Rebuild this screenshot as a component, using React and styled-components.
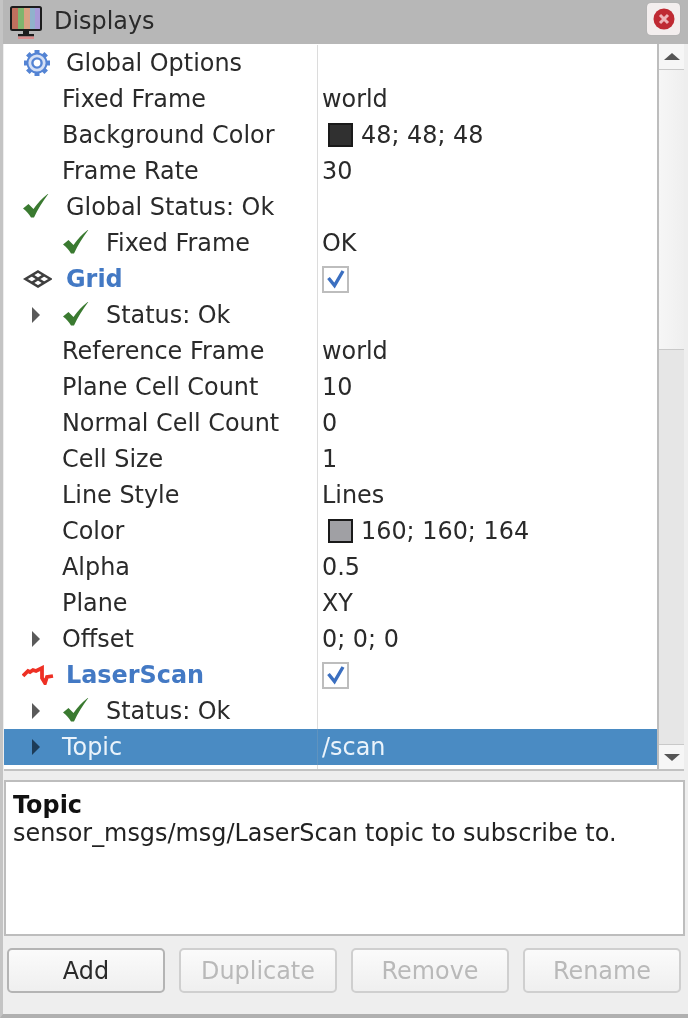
import React from "react";
import styled, { createGlobalStyle } from "styled-components";

const Global = createGlobalStyle`
  html, body { margin: 0; padding: 0; background: #eeeeee; }
  * { box-sizing: border-box; }
`;

const Panel = styled.div`
  width: 688px; height: 1018px; display: flex; flex-direction: column;
  background: #eeeeee; font-family: "DejaVu Sans", sans-serif; font-size: 23.9px; color: #2a2a2a;
  border-left: 3px solid #c4c4c4; border-bottom: 4px solid #b0b0b0;
  overflow: hidden; filter: blur(0.45px);
`;
const TitleBar = styled.div`
  height: 44px; flex: none; margin-left: -3px; background: #b7b7b7; display: flex; align-items: center;
  padding: 0 8px 0 10px;
`;
const TitleText = styled.span`
  margin-left: 12px; flex: 1; color: #2a2a2a; position: relative; top: -1px;
`;
const CloseButton = styled.div`
  width: 33px; height: 32px; border-radius: 4px; background: #f3eeee; display: flex; align-items: center; justify-content: center;
  position: relative; top: -3px; box-shadow: 0 0 1px #999;
`;
const TreeArea = styled.div`
  height: 727px; flex: none; display: flex; margin-left: 1px; margin-right: 4px; background: #fff; border-bottom: 2px solid #c2c2c2;
`;
const Tree = styled.div`
  flex: 1; min-width: 0; display: flex; flex-direction: column; padding-top: 1px;
`;
const Row = styled.div`
  height: 36px; flex: none; display: flex; align-items: center;
  background: ${p => (p.$selected ? "#4a8bc3" : "transparent")};
  color: ${p => (p.$selected ? "#eaf3fb" : "inherit")};
`;
const NameCell = styled.div`
  width: 313px; height: 100%; flex: none; display: flex; align-items: center; padding-left: 18px;
`;
const ValueCell = styled.div`
  flex: 1; height: 100%; display: flex; align-items: center; padding-left: 4px;
  border-left: 1px solid ${p => (p.$selected ? "#5f93bf" : "#dcdcdc")};
`;
const FillRow = styled.div`
  flex: 1; display: flex;
`;
const FillName = styled.div`
  width: 313px;
`;
const FillValue = styled.div`
  flex: 1; border-left: 1px solid #dcdcdc;
`;
const ArrowSlot = styled.div`
  width: 40px; flex: none; display: flex; padding-left: 10px; align-items: center;
`;
const IconSlot = styled.div`
  width: 44px; flex: none; display: flex; align-items: center;
`;
const Arrow = styled.div`
  width: 0; height: 0; border-style: solid; border-width: 8px 0 8px 8px;
  border-color: transparent transparent transparent ${p => (p.$selected ? "#1d3c58" : "#5a5a5a")};
`;
const Label = styled.span`
  white-space: nowrap;
  font-weight: ${p => (p.$display ? 700 : 400)};
  color: ${p => (p.$display ? "#4379c4" : "inherit")};
`;
const Swatch = styled.span`
  width: 25px; height: 24px; margin: 0 8px 0 6px; flex: none; border: 2px solid #1a1a1a; background: ${p => p.$color};
`;
const CheckBox = styled.span`
  width: 27px; height: 27px; flex: none; border: 2px solid #bdbdbd; background: #fff; display: flex; align-items: center; justify-content: center;
`;
const ScrollBar = styled.div`
  width: 27px; flex: none; display: flex; flex-direction: column; border-left: 2px solid #bdbdbd; background: #e6e6e6;
`;
const ScrollButton = styled.div`
  height: ${p => p.$h}px; flex: none; background: #f6f6f6; display: flex; align-items: center; justify-content: center;
  ${p => (p.$top ? "border-bottom: 1px solid #c9c9c9;" : "border-top: 1px solid #c9c9c9;")}
`;
const ScrollHandle = styled.div`
  height: 280px; flex: none; background: linear-gradient(90deg, #f6f6f6, #efefef); border-bottom: 1px solid #c9c9c9;
`;
const ScrollGroove = styled.div`
  flex: 1;
`;
const Triangle = styled.div`
  width: 0; height: 0; border-style: solid;
  border-width: ${p => (p.$up ? "0 8px 7px 8px" : "7px 8px 0 8px")};
  border-color: ${p => (p.$up ? "transparent transparent #555 transparent" : "#555 transparent transparent transparent")};
`;
const Description = styled.div`
  height: 156px; flex: none; margin: 9px 3px 0 1px; background: #fff; border: 2px solid #bdbdbd; padding: 9px 7px; line-height: 28px; color: #222;
`;
const DescTitle = styled.div`
  font-weight: 700; color: #111;
`;
const ButtonBar = styled.div`
  flex: 1; display: flex; gap: 14px; padding: 12px 0 0 4px;
`;
const Button = styled.div`
  width: 158px; height: 45px; border-radius: 5px; display: flex; align-items: center; justify-content: center;
  border: 2px solid ${p => (p.$disabled ? "#cfcfcf" : "#b4b4b4")};
  background: linear-gradient(#fbfbfb, #efefef);
  color: ${p => (p.$disabled ? "#b9b9b9" : "#2a2a2a")};
`;

const Monitor = () => (
  <svg width="32" height="33" viewBox="0 0 32 33">
    <rect x="2" y="2" width="6" height="21" fill="#c0705e" />
    <rect x="8" y="2" width="6" height="21" fill="#7fb56e" />
    <rect x="14" y="2" width="6" height="21" fill="#d9a183" />
    <rect x="20" y="2" width="5" height="21" fill="#90b2cc" />
    <rect x="25" y="2" width="5" height="21" fill="#a89ad8" />
    <rect x="1" y="1" width="30" height="23" rx="1.5" fill="none" stroke="#1c1c1c" strokeWidth="2" />
    <path d="M13 25h6v3h-6z" fill="#1c1c1c" />
    <path d="M8 28h16v2.5H8z" fill="#1c1c1c" />
    <path d="M8 30.5h16V33H8z" fill="#d98a8a" />
  </svg>
);
const Gear = () => (
  <svg width="28" height="28" viewBox="0 0 28 28">
    <g stroke="#5484d4" strokeWidth="5">
      {[0, 45, 90, 135, 180, 225, 270, 315].map(a => (
        <path key={a} d="M15 1v5" transform={`rotate(${a} 15 14)`} />
      ))}
    </g>
    <circle cx="15" cy="14" r="10.5" fill="#5484d4" />
    <circle cx="15" cy="14" r="8.6" fill="#d5e0f5" />
    <circle cx="15" cy="14" r="4.6" fill="#fff" stroke="#5484d4" strokeWidth="2.4" />
  </svg>
);
const Check = () => (
  <svg width="28" height="26" viewBox="0 1 28 26">
    <path d="M1 15.5 6.5 11 11.5 16C16 9.5 21 4.5 27 0 21.5 7.5 16 15.5 12 24.5H9C7 21 4.5 18 1 15.5z" fill="#3a7a30" />
  </svg>
);
const GridIcon = () => (
  <svg width="30" height="18" viewBox="0 0 30 18" fill="none" stroke="#3f3f3f" strokeWidth="2.6">
    <path d="M16 1.5 28.5 9 16 16.5 3.5 9z" />
    <path d="M10 5.2 22 12.8M22 5.2 10 12.8" />
  </svg>
);
const LaserIcon = () => (
  <svg width="32" height="20" viewBox="0 0 32 20" fill="none" stroke="#ee3024" strokeWidth="3.8">
    <path d="M1 11 6 6l2 1 3-2 3 1 6-3 0 10 3 5 2-6 6-1" />
  </svg>
);
const Tick = () => (
  <svg width="20" height="20" viewBox="0 0 20 20" fill="none">
    <path d="M2.5 9l6 7.5L17 2" stroke="#3b6fc0" strokeWidth="3.4" />
  </svg>
);
const CloseIcon = () => (
  <svg width="22" height="22" viewBox="0 0 22 22">
    <circle cx="11" cy="11" r="10.5" fill="#bf2a33" />
    <path d="M7 7l8 8M15 7l-8 8" stroke="#eeb4b8" strokeWidth="3" />
  </svg>
);

const rows = [
  { icon: <Gear />, name: "Global Options" },
  { indent: true, name: "Fixed Frame", value: "world" },
  { indent: true, name: "Background Color", value: "48; 48; 48", color: "#303030" },
  { indent: true, name: "Frame Rate", value: "30" },
  { icon: <Check />, name: "Global Status: Ok" },
  { indent: true, icon: <Check />, name: "Fixed Frame", value: "OK" },
  { icon: <GridIcon />, name: "Grid", display: true, checked: true },
  { indent: true, arrow: true, icon: <Check />, name: "Status: Ok" },
  { indent: true, name: "Reference Frame", value: "world" },
  { indent: true, name: "Plane Cell Count", value: "10" },
  { indent: true, name: "Normal Cell Count", value: "0" },
  { indent: true, name: "Cell Size", value: "1" },
  { indent: true, name: "Line Style", value: "Lines" },
  { indent: true, name: "Color", value: "160; 160; 164", color: "#a0a0a4" },
  { indent: true, name: "Alpha", value: "0.5" },
  { indent: true, name: "Plane", value: "XY" },
  { indent: true, arrow: true, name: "Offset", value: "0; 0; 0" },
  { icon: <LaserIcon />, name: "LaserScan", display: true, checked: true },
  { indent: true, arrow: true, icon: <Check />, name: "Status: Ok" },
  { indent: true, arrow: true, name: "Topic", value: "/scan", selected: true },
];

export default function App() {
  return (
    <>
      <Global />
      <Panel>
        <TitleBar>
          <Monitor />
          <TitleText>Displays</TitleText>
          <CloseButton><CloseIcon /></CloseButton>
        </TitleBar>
        <TreeArea>
          <Tree>
            {rows.map((r, i) => (
              <Row key={i} $selected={r.selected}>
                <NameCell>
                  {r.indent && <ArrowSlot>{r.arrow && <Arrow $selected={r.selected} />}</ArrowSlot>}
                  {r.icon && <IconSlot>{r.icon}</IconSlot>}
                  <Label $display={r.display}>{r.name}</Label>
                </NameCell>
                <ValueCell $selected={r.selected}>
                  {r.color && <Swatch $color={r.color} />}
                  {r.value}
                  {r.checked && <CheckBox><Tick /></CheckBox>}
                </ValueCell>
              </Row>
            ))}
            <FillRow><FillName /><FillValue /></FillRow>
          </Tree>
          <ScrollBar>
            <ScrollButton $h={26} $top><Triangle $up /></ScrollButton>
            <ScrollHandle />
            <ScrollGroove />
            <ScrollButton $h={25}><Triangle /></ScrollButton>
          </ScrollBar>
        </TreeArea>
        <Description>
          <DescTitle>Topic</DescTitle>
          sensor_msgs/msg/LaserScan topic to subscribe to.
        </Description>
        <ButtonBar>
          <Button>Add</Button>
          <Button $disabled>Duplicate</Button>
          <Button $disabled>Remove</Button>
          <Button $disabled>Rename</Button>
        </ButtonBar>
      </Panel>
    </>
  );
}
